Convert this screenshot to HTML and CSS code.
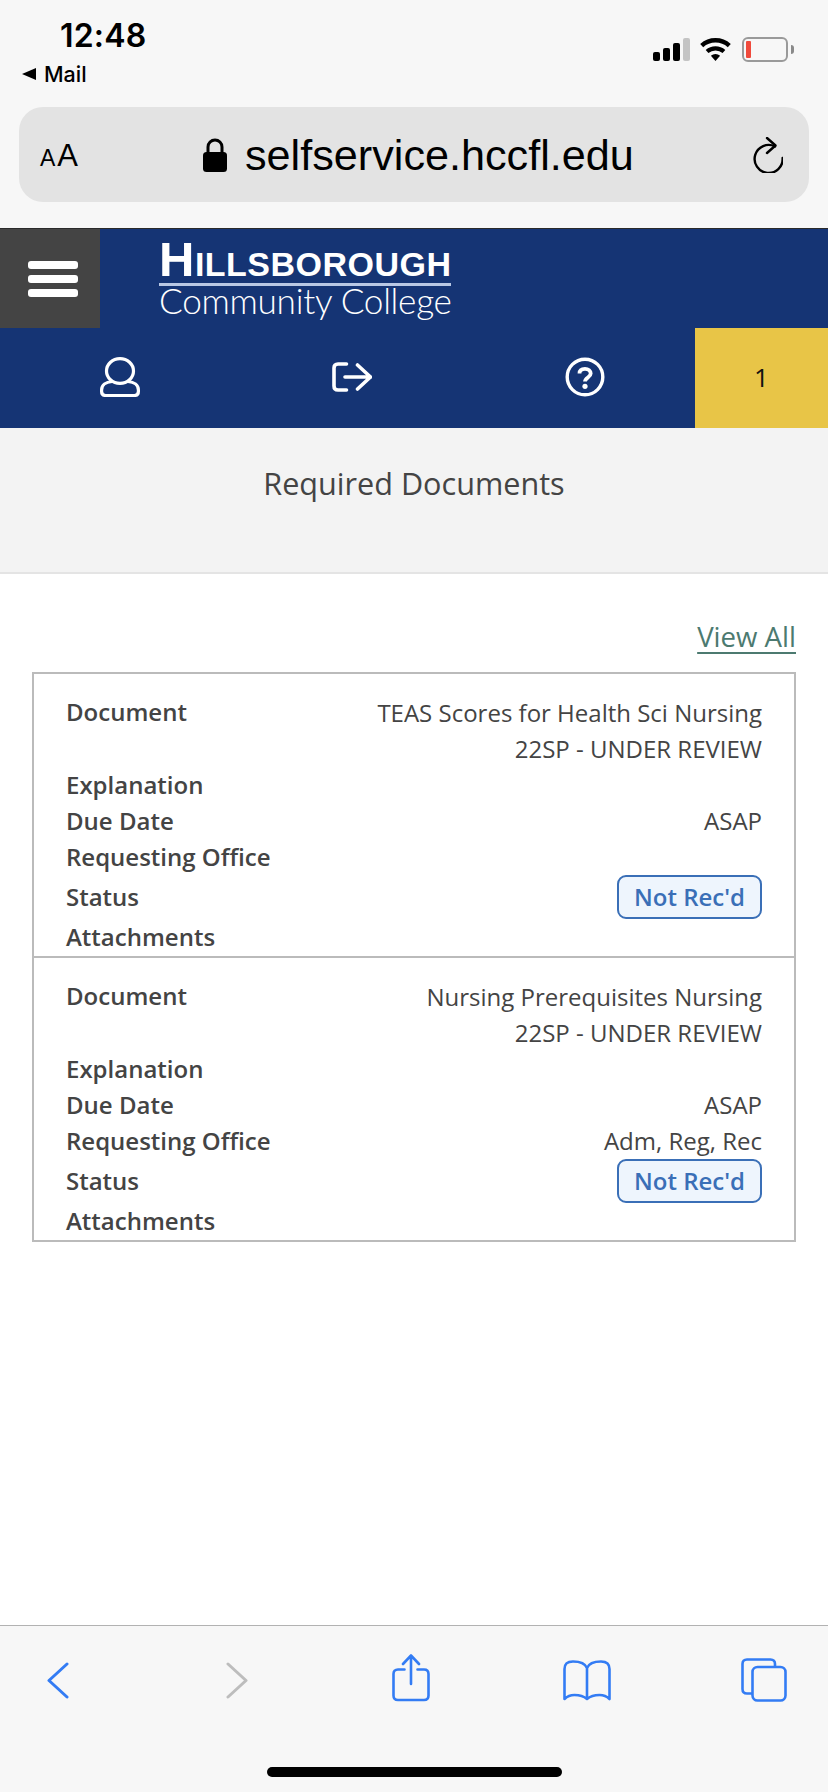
FILE: index.html
```html
<!DOCTYPE html>
<html lang="en">
<head>
<meta charset="utf-8">
<title>Required Documents</title>
<link rel="stylesheet" href="styles.css">
</head>
<body>
<div class="phone">
  <div class="chrome">
    <div class="status">
      <div class="status-left">
        <div class="time">12:48</div>
        <div class="back-app"><span class="tri"></span><span>Mail</span></div>
      </div>
      <div class="status-right">
        <div class="signal"><i class="b1"></i><i class="b2"></i><i class="b3"></i><i class="b4"></i></div>
        <svg class="wifi" width="31" height="24" viewBox="0 0 31 24"><path d="M15.5 24l-4.6-5.2a7 7 0 0 1 9.200 0zM8.400 16a11 11 0 0 1 14.200 0l2.700-3a15 15 0 0 0-19.600 0zM3.200 10.200a18.800 18.800 0 0 1 24.600 0l3-3.300a23 23 0 0 0-30.600 0z" fill="#000"/></svg>
        <div class="battery"><div class="cell"><span class="charge"></span></div><span class="nub"></span></div>
      </div>
    </div>
    <div class="address">
      <div class="aa"><span class="a-small">A</span><span class="a-large">A</span></div>
      <div class="url">
        <svg class="lock" width="24" height="34" viewBox="0 0 24 34"><path d="M5 15V9a7 7 0 0 1 14 0v6" fill="none" stroke="#000" stroke-width="3"/><rect y="14" width="24" height="20" rx="3.500" fill="#000"/></svg>
        <span>selfservice.hccfl.edu</span>
      </div>
      <svg class="reload" width="30" height="36" viewBox="0 0 30 36" fill="none" stroke="#000" stroke-width="2.400" stroke-linecap="round" stroke-linejoin="round"><path d="M29.600 21A14 14 0 1 1 22 9.500"/><path d="M14 1l8.500 7.500-8.500 7.500"/></svg>
    </div>
  </div>

  <header class="site">
    <div class="brand-row">
      <button class="menu" type="button"><i></i><i></i><i></i></button>
      <div class="logo">
        <div class="logo-top">Hillsborough</div>
        <div class="logo-sub">Community College</div>
      </div>
    </div>
    <nav class="nav">
      <div class="nav-cell">
        <svg width="40" height="40" viewBox="0 0 40 40" fill="none" stroke="#fff" stroke-width="3.200"><ellipse cx="20" cy="14" rx="13.500" ry="12.400"/><path d="M12 24.500C6 25 1.600 28 1.600 33v1.500q0 4 4 4h28.800q4 0 4-4V33c0-5-4.400-8-10.400-8.500"/></svg>
      </div>
      <div class="nav-cell">
        <svg width="40" height="30" viewBox="0 0 40 30" fill="none" stroke="#fff" stroke-width="3.600" stroke-linecap="round" stroke-linejoin="round"><path d="M14.500 2H6Q2 2 2 6v18q0 4 4 4h8.500"/><path d="M13 15h25.500M25.500 3L38.500 15 25.500 27"/></svg>
      </div>
      <div class="nav-cell nav-help">
        <svg width="40" height="40" viewBox="0 0 40 40" fill="none" stroke="#fff"><circle cx="20" cy="20" r="17.800" stroke-width="3.400"/><path d="M14.500 16.500C14.500 13.200 17 11.800 20 11.800c3.300 0 5.700 2 5.700 4.800 0 3.800-5.700 4-5.700 8" stroke-width="3.800"/><circle cx="20" cy="29.300" r="2.600" fill="#fff" stroke="none"/></svg>
      </div>
      <div class="nav-count">1</div>
    </nav>
  </header>

  <main class="content">
    <div class="title-band"><h1>Required Documents</h1></div>
    <div class="body">
      <div class="view-all"><a href="#">View All</a></div>
      <div class="doc-box">
        <dl class="doc">
          <div class="row tall"><dt>Document</dt><dd>TEAS Scores for Health Sci Nursing<br>22SP - UNDER REVIEW</dd></div>
          <div class="row"><dt>Explanation</dt><dd></dd></div>
          <div class="row"><dt>Due Date</dt><dd>ASAP</dd></div>
          <div class="row"><dt>Requesting Office</dt><dd></dd></div>
          <div class="row status-row"><dt>Status</dt><dd><span class="badge">Not Rec'd</span></dd></div>
          <div class="row"><dt>Attachments</dt><dd></dd></div>
        </dl>
        <dl class="doc">
          <div class="row tall"><dt>Document</dt><dd>Nursing Prerequisites Nursing<br>22SP - UNDER REVIEW</dd></div>
          <div class="row"><dt>Explanation</dt><dd></dd></div>
          <div class="row"><dt>Due Date</dt><dd>ASAP</dd></div>
          <div class="row"><dt>Requesting Office</dt><dd>Adm, Reg, Rec</dd></div>
          <div class="row status-row"><dt>Status</dt><dd><span class="badge">Not Rec'd</span></dd></div>
          <div class="row"><dt>Attachments</dt><dd></dd></div>
        </dl>
      </div>
    </div>
  </main>

  <footer class="toolbar">
    <div class="tools">
      <svg class="t-back" width="22" height="37" viewBox="0 0 22 37" fill="none" stroke="#337cf4" stroke-width="3" stroke-linecap="round" stroke-linejoin="round"><path d="M20 2L2 18.500 20 35"/></svg>
      <svg class="t-fwd" width="22" height="37" viewBox="0 0 22 37" fill="none" stroke="#bdbdbd" stroke-width="3" stroke-linecap="round" stroke-linejoin="round"><path d="M2 2l18 16.500L2 35"/></svg>
      <svg class="t-share" width="38" height="48" viewBox="0 0 38 48" fill="none" stroke="#337cf4" stroke-width="2.600" stroke-linecap="round" stroke-linejoin="round"><path d="M12.500 15.500H6q-4.500 0-4.500 4.500v21.500q0 4.500 4.500 4.500h26q4.500 0 4.500-4.500V20q0-4.500-4.500-4.500h-6.500"/><path d="M19 30V1.500M11 10l8-8.500 8 8.500"/></svg>
      <svg class="t-book" width="48" height="41" viewBox="0 0 48 41" fill="none" stroke="#337cf4" stroke-width="2.600" stroke-linejoin="round"><path d="M24 39V8C22 3 17 1.500 10 1.500 4 1.500 1.500 4 1.500 9v30c3-3 6-4 10-4 5 0 9 1 12.500 4 3.500-3 7.500-4 12.500-4 4 0 7 1 10 4V9c0-5-2.500-7.500-8.500-7.500-7 0-12 1.500-14 6.500"/></svg>
      <svg class="t-tabs" width="46" height="44" viewBox="0 0 46 44" fill="none" stroke="#337cf4" stroke-width="2.600"><path d="M34 8V6q0-4.500-4.500-4.500H6Q1.500 1.500 1.500 6v25Q1.500 35.500 6 35.500h5"/><rect x="11.500" y="9" width="33" height="33.500" rx="5"/></svg>
    </div>
    <div class="home-bar"></div>
  </footer>
</div>
</body>
</html>
```
FILE: styles.css
```css
* { box-sizing: border-box; }
html, body { margin: 0; padding: 0; background: #fff; }
body { font-family: "Open Sans", "Liberation Sans", sans-serif; color: #444; }
.phone { width: 828px; height: 1792px; display: flex; flex-direction: column; overflow: hidden; }

/* Browser chrome */
.chrome { height: 228px; background: #f7f7f7; padding: 0 19px; flex: none; }
.status { height: 107px; display: flex; justify-content: space-between; }
.status-left { padding: 18px 0 0 41px; color: #000; font-family: Inter, "Liberation Sans", sans-serif; }
.time { font-size: 32px; font-weight: 600; line-height: 36px; letter-spacing: 0.2px; }
.back-app { display: flex; align-items: center; gap: 8px; margin: 7px 0 0 -38px; font-size: 21.5px; font-weight: 500; line-height: 26px; }
.tri { width: 0; height: 0; border-style: solid; border-width: 6.5px 14px 6.5px 0; border-color: transparent #000 transparent transparent; }
.status-right { display: flex; align-items: flex-end; gap: 10px; height: 62px; }
.signal { display: flex; align-items: flex-end; gap: 3px; height: 23px; margin-bottom: 1px; }
.signal i { width: 7px; border-radius: 2px; background: #000; display: block; }
.signal .b1 { height: 9px; }
.signal .b2 { height: 13px; }
.signal .b3 { height: 18px; }
.signal .b4 { height: 23px; background: #c4c4c4; }
.wifi { margin-bottom: 1px; }
.battery { display: flex; align-items: center; gap: 3px; margin-right: 15px; margin-left: 1px; }
.cell { width: 46px; height: 25px; border: 2px solid #9a9a9a; border-radius: 6px; padding: 2px; }
.charge { display: block; width: 5px; height: 100%; background: #f04a3c; border-radius: 1px; }
.nub { width: 3px; height: 9px; background: #8a8a8a; border-radius: 0 3px 3px 0; }

.address { height: 95px; border-radius: 24px; background: #e3e3e3; display: flex; align-items: center; color: #000; font-family: "Liberation Sans", sans-serif; padding: 0 26px 0 21px; }
.aa { display: flex; align-items: baseline; gap: 2px; width: 163px; line-height: 1; padding-top: 2px; }
.a-small { font-size: 23px; }
.a-large { font-size: 31px; }
.url { display: flex; align-items: center; gap: 18px; font-size: 43.2px; line-height: 44px; flex: 1; }
.reload { flex: none; }

/* Site header */
.site { flex: none; background: #153474; border-top: 1px solid #2a2a2a; }
.brand-row { height: 99px; display: flex; }
.menu { width: 100px; height: 99px; border: 0; padding: 0 0 0 6px; background: #444; display: flex; flex-direction: column; align-items: center; justify-content: center; gap: 6px; }
.menu i { display: block; width: 50px; height: 8px; border-radius: 3px; background: #fff; filter: blur(0.6px); }
.logo { margin-left: 59px; padding-top: 10px; color: #fff; width: 292px; }
.logo-top { font-family: "Liberation Sans", sans-serif; font-weight: 700; font-size: 49px; line-height: 40px; font-variant: small-caps; white-space: nowrap; border-bottom: 3px solid #b9c8e4; height: 47px; letter-spacing: 0.5px; }
.logo-sub { font-family: Lato, "Liberation Sans", sans-serif; font-weight: 300; font-size: 35.2px; line-height: 28px; white-space: nowrap; letter-spacing: -0.3px; }
.nav { height: 100px; display: flex; padding-left: 4px; }
.nav-cell { width: 232px; display: flex; align-items: center; justify-content: center; padding-bottom: 2px; }
.nav-help { width: 227px; padding-left: 7px; }
.nav-count { width: 133px; background: #e8c547; color: #111; font-size: 26px; font-weight: 400; padding-bottom: 3px; display: flex; align-items: center; justify-content: center; }

/* Content */
.content { flex: 1; display: flex; flex-direction: column; min-height: 0; }
.title-band { height: 146px; background: #f3f3f3; border-bottom: 2px solid #e4e4e4; padding-top: 35px; }
h1 { margin: 0; text-align: center; font-size: 30.6px; font-weight: 400; line-height: 40px; color: #444; }
.body { padding: 0 32px; }
.view-all { height: 98px; padding-top: 42px; text-align: right; font-size: 27.6px; line-height: 40px; }
.view-all a { color: #4c7a70; text-decoration: underline; text-underline-offset: 5px; }
.doc-box { border: 2px solid #bbb; }
.doc { margin: 0; padding: 20px 32px 1px; }
.doc + .doc { border-top: 2px solid #bbb; }
.row { display: flex; justify-content: space-between; align-items: center; min-height: 36px; font-size: 24px; line-height: 36px; }
.row.tall { align-items: flex-start; }
.row.tall dd { padding-top: 1px; }
.row.status-row { min-height: 44px; }
dt { font-weight: 600; color: #444; }
dd { margin: 0; text-align: right; color: #444; }
.badge { display: block; height: 44px; line-height: 39px; padding: 0 15px; border: 2px solid #3a6fb7; border-radius: 9px; background: #eef5fd; color: #3a6fb7; font-weight: 600; }

/* Toolbar */
.toolbar { flex: none; height: 167px; background: #f7f7f7; border-top: 1px solid #b2b2b2; }
.tools { display: flex; align-items: flex-start; padding: 28px 0 0 0; height: 141px; }
.t-back { margin: 8px 0 0 47px; }
.t-fwd { margin: 8px 0 0 157px; }
.t-share { margin: 0 0 0 144px; }
.t-book { margin: 6px 0 0 133px; }
.t-tabs { margin: 4px 0 0 130px; }
.home-bar { width: 295px; height: 10px; background: #000; border-radius: 5px; margin-left: 267px; }
```
